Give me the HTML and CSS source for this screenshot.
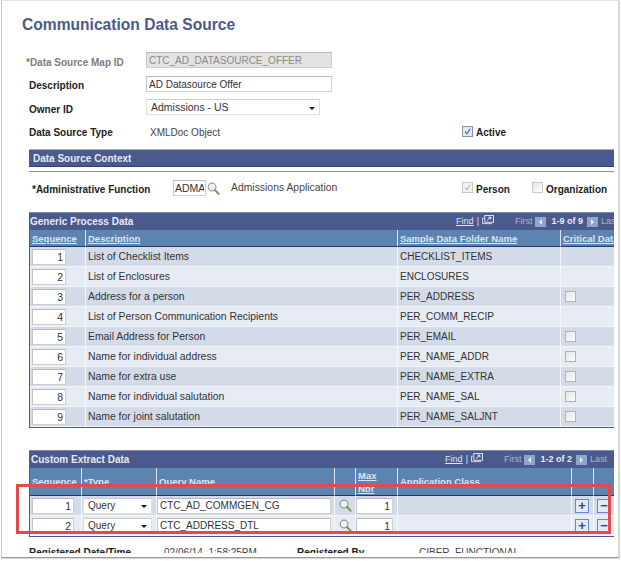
FILE: index.html
```html
<!DOCTYPE html>
<html lang="en">
<head>
<meta charset="utf-8">
<title>Communication Data Source</title>
<link rel="stylesheet" href="styles.css">
</head>
<body>
<svg class="defs" width="0" height="0" aria-hidden="true">
  <symbol id="mag" viewBox="0 0 14 14">
    <circle cx="5.5" cy="5.5" r="4.2" fill="#eef3f6" stroke="#8d9aa6" stroke-width="1.3"/>
    <path d="M8.6 8.6L12.6 12.8" stroke="#8f8a4c" stroke-width="2" stroke-linecap="round"/>
  </symbol>
  <symbol id="pop" viewBox="0 0 13 11">
    <path d="M.5 9.5V3.5H2M.5 9.5H11" fill="none" stroke="#dfe5f0"/>
    <rect x="3" y=".5" width="9.5" height="7.5" fill="#4a5a8c" stroke="#e8edf5"/>
    <path d="M5.5 6l4-3.4M7 2.4h2.7v2.4" fill="none" stroke="#fff"/>
  </symbol>
</svg>
<main class="frame">
  <div class="page">
    <h1 class="title">Communication Data Source</h1>

    <div class="field-row row-map">
      <label class="label label-low label-muted">*Data Source Map ID</label>
      <input class="input input-disabled input-wide" value="CTC_AD_DATASOURCE_OFFER" readonly>
    </div>
    <div class="field-row row-desc">
      <label class="label">Description</label>
      <input class="input input-wide" value="AD Datasource Offer" readonly>
    </div>
    <div class="field-row row-owner">
      <label class="label label-low">Owner ID</label>
      <div class="select select-owner"><span>Admissions - US</span><i class="caret"></i></div>
    </div>
    <div class="field-row row-type">
      <label class="label label-flat">Data Source Type</label>
      <span class="value value-type">XMLDoc Object</span>
      <span class="check check-on"><svg viewBox="0 0 11 11"><path d="M2.5 5.5l2.2 2.8 4-6" fill="none" stroke="#5a6fb0" stroke-width="1.5"/></svg></span>
      <span class="label label-flat check-label">Active</span>
    </div>

    <div class="section-bar">Data Source Context</div>
    <div class="section-rule"></div>

    <div class="context-row">
      <label class="label label-admin">*Administrative Function</label>
      <input class="input input-admin" value="ADMA" readonly>
      <svg class="mag mag-admin"><use href="#mag"/></svg>
      <span class="value value-admin">Admissions Application</span>
      <span class="check check-person check-dim"><svg viewBox="0 0 11 11"><path d="M2.5 5.5l2.2 2.8 4-6" fill="none" stroke="#b4b4b4" stroke-width="1.3"/></svg></span>
      <span class="label check-label label-person">Person</span>
      <span class="check check-org"></span>
      <span class="label check-label">Organization</span>
    </div>

    <section class="grid grid-generic">
      <div class="grid-title">
        <span class="grid-name">Generic Process Data</span>
        <span class="grid-nav nav-generic">
          <a class="nav-find">Find</a><span class="nav-sep">|</span><svg class="nav-pop"><use href="#pop"/></svg>
          <span class="nav-first">First</span><i class="nav-btn"><b class="tri tri-l"></b></i><span class="nav-count">1-9 of 9</span><i class="nav-btn"><b class="tri tri-r"></b></i><span class="nav-last">Last</span>
        </span>
      </div>
      <table class="table table-generic">
        <colgroup><col class="g1"><col class="g2"><col class="g3"><col class="g4"></colgroup>
        <thead><tr><th><a>Sequence</a></th><th><a>Description</a></th><th><a>Sample Data Folder Name</a></th><th><a>Critical Data</a></th></tr></thead>
        <tbody>
          <tr><td><input class="input input-seq" value="1" readonly></td><td>List of Checklist Items</td><td>CHECKLIST_ITEMS</td><td></td></tr>
          <tr><td><input class="input input-seq" value="2" readonly></td><td>List of Enclosures</td><td>ENCLOSURES</td><td></td></tr>
          <tr><td><input class="input input-seq" value="3" readonly></td><td>Address for a person</td><td>PER_ADDRESS</td><td><span class="check check-cell"></span></td></tr>
          <tr><td><input class="input input-seq" value="4" readonly></td><td>List of Person Communication Recipients</td><td>PER_COMM_RECIP</td><td></td></tr>
          <tr><td><input class="input input-seq" value="5" readonly></td><td>Email Address for Person</td><td>PER_EMAIL</td><td><span class="check check-cell"></span></td></tr>
          <tr><td><input class="input input-seq" value="6" readonly></td><td>Name for individual address</td><td>PER_NAME_ADDR</td><td><span class="check check-cell"></span></td></tr>
          <tr><td><input class="input input-seq" value="7" readonly></td><td>Name for extra use</td><td>PER_NAME_EXTRA</td><td><span class="check check-cell"></span></td></tr>
          <tr><td><input class="input input-seq" value="8" readonly></td><td>Name for individual salutation</td><td>PER_NAME_SAL</td><td><span class="check check-cell"></span></td></tr>
          <tr><td><input class="input input-seq" value="9" readonly></td><td>Name for joint salutation</td><td>PER_NAME_SALJNT</td><td><span class="check check-cell"></span></td></tr>
        </tbody>
      </table>
    </section>

    <section class="grid grid-custom">
      <div class="grid-title">
        <span class="grid-name">Custom Extract Data</span>
        <span class="grid-nav nav-custom">
          <a class="nav-find">Find</a><span class="nav-sep">|</span><svg class="nav-pop"><use href="#pop"/></svg>
          <span class="nav-first">First</span><i class="nav-btn"><b class="tri tri-l"></b></i><span class="nav-count">1-2 of 2</span><i class="nav-btn"><b class="tri tri-r"></b></i><span class="nav-last">Last</span>
        </span>
      </div>
      <table class="table table-custom">
        <colgroup><col class="c1"><col class="c2"><col class="c3"><col class="c4"><col class="c5"><col class="c6"><col class="c7"><col class="c8"></colgroup>
        <thead><tr><th class="plain">Sequence</th><th class="plain">*Type</th><th class="plain">Query Name</th><th></th><th class="stack"><a>Max</a><a>Nbr</a></th><th class="plain">Application Class</th><th></th><th></th></tr></thead>
        <tbody>
          <tr>
            <td><input class="input input-cseq" value="1" readonly></td>
            <td><div class="select select-type"><span>Query</span><i class="caret"></i></div></td>
            <td><input class="input input-query" value="CTC_AD_COMMGEN_CG" readonly></td>
            <td class="icon-cell"><svg class="mag"><use href="#mag"/></svg></td>
            <td><input class="input input-max" value="1" readonly></td>
            <td></td>
            <td class="icon-cell"><span class="rowbtn">+</span></td>
            <td class="icon-cell"><span class="rowbtn">&minus;</span></td>
          </tr>
          <tr>
            <td><input class="input input-cseq" value="2" readonly></td>
            <td><div class="select select-type"><span>Query</span><i class="caret"></i></div></td>
            <td><input class="input input-query" value="CTC_ADDRESS_DTL" readonly></td>
            <td class="icon-cell"><svg class="mag"><use href="#mag"/></svg></td>
            <td><input class="input input-max" value="1" readonly></td>
            <td></td>
            <td class="icon-cell"><span class="rowbtn">+</span></td>
            <td class="icon-cell"><span class="rowbtn">&minus;</span></td>
          </tr>
        </tbody>
      </table>
    </section>

    <div class="footer-row">
      <span class="label foot-a">Registered Date/Time</span>
      <span class="value foot-b">02/06/14&nbsp; 1:58:25PM</span>
      <span class="label foot-c">Registered By</span>
      <span class="value foot-d">CIBER_FUNCTIONAL</span>
    </div>
  </div>
  <div class="callout"></div>
</main>
</body>
</html>
```

FILE: styles.css
```css
* { box-sizing: border-box; }
html, body { margin: 0; padding: 0; background: #fff; }
body { width: 621px; height: 561px; overflow: hidden; font-family: "Liberation Sans", Arial, sans-serif; font-size: 10px; color: #333; }
.defs { position: absolute; }

.frame {
  position: relative;
  width: 618px;
  height: 558px;
  margin-left: 1px;
  border: 1px solid #c9c9c9;
  border-bottom-color: #9a9a9a;
  border-right-color: #d6d6d6;
  border-top-color: #e4e4e4;
  box-shadow: 1px 1px 1px #d8d8d8;
  overflow: hidden;
}
.page { width: 612px; height: 552px; padding: 0 0 0 27px; overflow: hidden; }

.title { margin: 0 0 0 -7px; padding: 15px 0 0; height: 51px; font-size: 15.6px; line-height: 18px; font-weight: bold; color: #4b5a8d; }

.label { font-weight: bold; color: #222; padding-top: 3px; }
.label-low { padding-top: 5px; }
.label-flat { padding-top: 0; }
.label-muted { color: #7d7d7d; margin-left: -3px; width: 120px; }
.value { color: #444; }

.field-row { display: flex; align-items: center; }
.field-row > .label:first-child:not(.label-muted) { width: 117px; }
.row-map { height: 16px; }
.row-desc { height: 16px; margin-top: 8px; }
.row-owner { height: 16px; margin-top: 7px; }
.row-type { height: 16px; margin-top: 9px; }
.value-type { margin-left: 4px; width: 312px; }

.input {
  display: block;
  height: 16px;
  padding: 0 2px;
  border: 1px solid #cfcfcf;
  border-top-color: #b9b9b9;
  border-left-color: #c4c4c4;
  background: #fff;
  font: 10px "Liberation Sans", Arial, sans-serif;
  color: #333;
  outline: none;
}
.input-wide { width: 186px; }
.input-disabled { background: #e3e3e3; color: #8a8a8a; }
.input-admin { flex: none; width: 33px; padding: 0 1px; font-size: 10.5px; }

.select {
  display: flex;
  align-items: center;
  justify-content: space-between;
  height: 16px;
  padding: 0 4px;
  border: 1px solid #e0e0e0;
  border-top-color: #cccccc;
  background: #fff;
  color: #333;
}
.select-owner { width: 174px; font-size: 10.5px; }
.select-type { width: 69px; margin-left: -1px; padding: 0 4px; }
.caret { display: block; width: 0; height: 0; margin-top: 2px; border: 3px solid transparent; border-top: 3px solid #111; border-bottom: 0; }

.check { display: block; flex: none; width: 11px; height: 11px; border: 1px solid #a9a9a9; background: linear-gradient(135deg, #e4e4e4, #fff); }
.check svg { display: block; width: 100%; height: 100%; }
.row-type .check { margin-bottom: 2px; }
.context-row .check { margin-bottom: 2px; }
.check-on { border-color: #8590ad; background: #e6e9f2; }
.check-dim { border-color: #c9c9c9; background: #f2f2f2; }
.check-org { border-color: #c9c9c9; margin-left: 9px; }
.check-label { flex: none; margin-left: 3px; }
.label-person { width: 47px; }

.section-bar {
  width: 585px;
  height: 18px;
  margin-top: 9px;
  padding-left: 4px;
  border-top: 1px solid #a6aec6;
  border-bottom: 1px solid #2f4272;
  background: #4a5a8c;
  color: #e6eaf4;
  font-weight: bold;
  line-height: 17px;
}
.section-rule { width: 585px; height: 5px; border-bottom: 1px solid #7f8cb8; }

.context-row { display: flex; align-items: center; height: 16px; margin-top: 8px; }
.label-admin { flex: none; width: 141px; margin-left: 3px; }
.mag { display: block; flex: none; width: 13px; height: 13px; }
.mag-admin { margin-left: 1px; }
.value-admin { flex: none; margin-left: 11px; width: 231px; margin-bottom: 2px; font-size: 10.4px; }

.grid { width: 585px; overflow: hidden; }
.grid-generic { margin-top: 16px; }
.grid-custom { margin-top: 22px; }
.grid-title {
  display: flex;
  justify-content: space-between;
  width: 600px;
  height: 18px;
  padding-left: 1px;
  background: #4a5a8c;
  border-top: 1px solid #7f89a8;
  line-height: 17px;
  color: #e6eaf4;
}
.grid-name { font-weight: bold; }
.grid-custom .grid-name { padding-left: 1px; }
.grid-nav { display: flex; align-items: center; height: 17px; font-size: 9px; color: #aab4d0; }
.nav-generic { margin-right: 11px; }
.nav-custom { margin-right: 22px; }
.nav-find { color: #dfe6f4; text-decoration: underline; }
.nav-sep { color: #dfe6f4; margin: 0 3px 0 3px; }
.nav-pop { display: block; width: 12px; height: 10px; margin-top: -4px; }
.nav-first { margin-left: 21px; }
.nav-btn { display: flex; align-items: center; justify-content: center; width: 11px; height: 10px; margin: 0 5px 0 3px; background: #8ea6cc; }
.nav-count + .nav-btn { margin: 0 3px 0 4px; }
.tri { display: block; width: 0; height: 0; border: 3px solid transparent; }
.tri-l { border-right-color: #e8eef7; border-left: 0; }
.tri-r { border-left-color: #e8eef7; border-right: 0; }
.nav-count { color: #e6eaf4; font-weight: bold; }

.table { border-collapse: separate; border-spacing: 0; table-layout: fixed; border-left: 1px solid #4a5a8c; }
.table-generic { width: 601px; border-bottom: 1px solid #4a5a8c; }
.table-custom { width: 587px; border-bottom: 1px solid #4a5a8c; }
.g1 { width: 56px; } .g2 { width: 312px; } .g3 { width: 163px; } .g4 { width: 69px; }
.c1 { width: 52px; } .c2 { width: 75px; } .c3 { width: 178px; } .c4 { width: 21px; } .c5 { width: 42px; } .c6 { width: 174px; } .c7 { width: 22px; } .c8 { width: 22px; }

.table th {
  height: 17px;
  padding: 0 0 0 2px;
  border-right: 1px solid #dce4ef;
  border-bottom: 1px solid #24375f;
  background: #5b84b1;
  color: #dbe5f3;
  font-size: 9.5px;
  font-weight: bold;
  text-align: left;
  white-space: nowrap;
  overflow: hidden;
}
.table th a { text-decoration: underline; }
.table-custom th { height: 27px; vertical-align: top; padding: 7px 0 0 2px; line-height: 13px; }
.table-custom th.stack { padding: 1px 0 0 2px; }
.stack a { display: block; line-height: 13px; }

.table td {
  height: 20px;
  padding: 0 0 0 2px;
  border-right: 1px solid #f4f6fa;
  border-bottom: 1px solid #f4f6fa;
  background: #d3dbe8;
  color: #333;
  white-space: nowrap;
  overflow: hidden;
}
.table tbody tr:nth-child(even) td { background: #e6ebf4; }
.table-generic td:nth-child(2) { font-size: 10.4px; }

.input-seq { width: 34px; text-align: right; font-size: 10.5px; }
.input-cseq { width: 42px; text-align: right; font-size: 10.5px; }
.input-query { width: 174px; margin-left: -2px; }
.input-max { width: 37px; text-align: right; margin-left: -2px; font-size: 10.5px; }
.icon-cell .mag { margin-left: 2px; }
.check-cell { margin-left: 2px; border-color: #b3b3b3; }

.rowbtn {
  display: block;
  width: 14px;
  height: 14px;
  margin-left: 1px;
  border: 1px solid #6f84c2;
  background: #e4e9f6;
  color: #2d4a8c;
  font-weight: bold;
  font-size: 13px;
  line-height: 11px;
  text-align: center;
}

.footer-row { display: flex; margin-top: 9px; line-height: 13px; }
.footer-row .label { padding-top: 0; }
.foot-a { width: 135px; }
.foot-b { width: 133px; }
.foot-c { width: 122px; }

.callout {
  position: absolute;
  left: 14px;
  top: 483px;
  width: 595px;
  height: 50px;
  border: 3px solid #e04b4b;
}
```
